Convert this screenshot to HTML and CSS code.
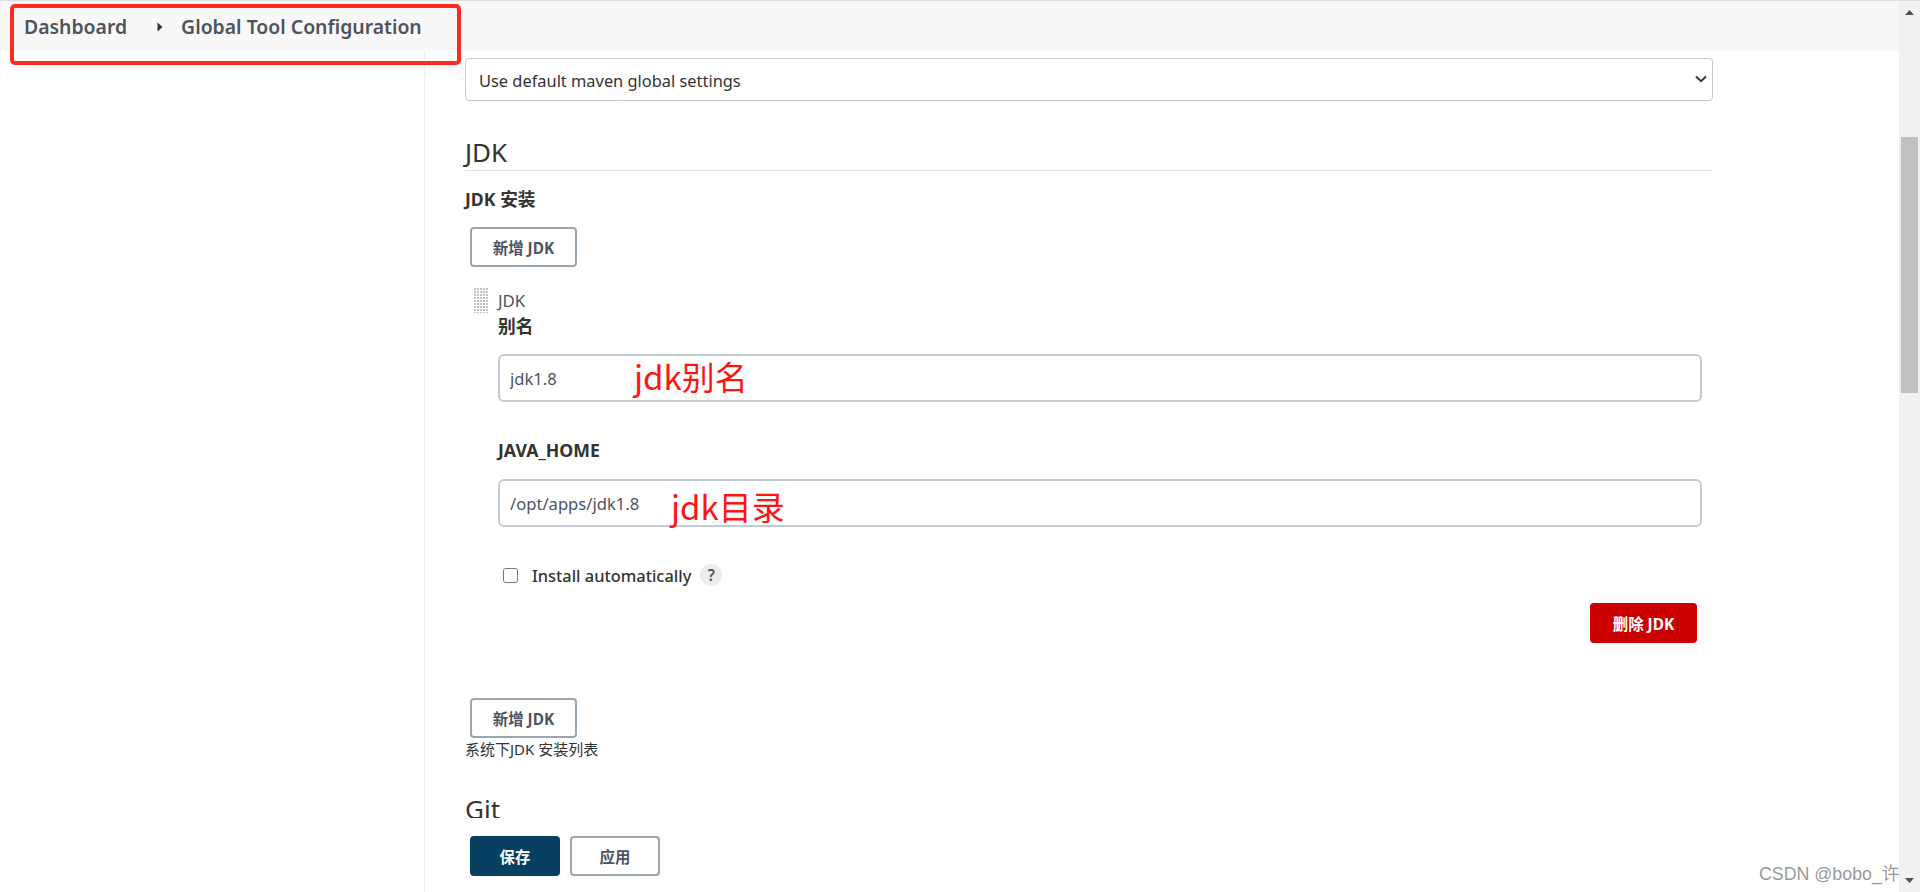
FILE: index.html
```html
<!DOCTYPE html>
<html lang="zh">
<head>
<meta charset="utf-8">
<title>Global Tool Configuration</title>
<link rel="stylesheet" href="styles.css">
</head>
<body>
<div class="page">
  <div class="viewport">
    <header class="breadcrumbs">
      <a class="crumb">Dashboard</a>
      <svg class="crumb-arrow" width="6" height="10" viewBox="0 0 6 10"><path d="M0.5 0.5L5.5 5L0.5 9.5Z" fill="#333"/></svg>
      <a class="crumb">Global Tool Configuration</a>
    </header>
    <div class="main">
      <aside class="side"></aside>
      <section class="content">
        <div class="select-wrap">
          <select class="select"><option>Use default maven global settings</option></select>
          <svg class="chevron" width="12" height="8" viewBox="0 0 12 8"><path d="M1 1.5L6 6.2L11 1.5" fill="none" stroke="#333" stroke-width="2"/></svg>
        </div>
        <h2 class="section-title">JDK</h2>
        <div class="field-label install-label">JDK 安装</div>
        <button class="btn btn-add first-add">新增 JDK</button>
        <div class="repeat-item">
          <div class="handle"></div>
          <div class="item-body">
            <div class="item-title">JDK</div>
            <div class="field-label">别名</div>
            <div class="input-wrap alias-wrap">
              <input class="input" value="jdk1.8">
              <span class="note note-alias">jdk别名</span>
            </div>
            <div class="field-label home-label">JAVA_HOME</div>
            <div class="input-wrap home-wrap">
              <input class="input" value="/opt/apps/jdk1.8">
              <span class="note note-home">jdk目录</span>
            </div>
            <div class="check-row">
              <input type="checkbox" class="check" id="auto">
              <label class="check-label" for="auto">Install automatically</label>
              <span class="help">?</span>
            </div>
            <div class="delete-row"><button class="btn btn-delete">删除 JDK</button></div>
          </div>
        </div>
        <button class="btn btn-add second-add">新增 JDK</button>
        <div class="desc">系统下JDK 安装列表</div>
        <div class="git-clip"><h2 class="git-title">Git</h2></div>
        <div class="bottom-bar">
          <button class="btn btn-save">保存</button>
          <button class="btn btn-apply">应用</button>
        </div>
      </section>
    </div>
    <div class="red-frame"></div>
  </div>
  <div class="scrollbar">
    <svg class="arrow-up" width="9" height="5" viewBox="0 0 9 5"><path d="M4.5 0L9 5H0Z" fill="#505050"/></svg>
    <div class="thumb"></div>
    <svg class="arrow-down" width="9" height="5" viewBox="0 0 9 5"><path d="M0 0H9L4.5 5Z" fill="#505050"/></svg>
  </div>
  <div class="watermark">CSDN @bobo_许</div>
</div>
</body>
</html>
```

FILE: styles.css
```css
* { box-sizing: border-box; }
html, body { margin: 0; height: 100%; overflow: hidden; background: #fff; }
body { font-family: "Noto Sans", "Noto Sans CJK SC", sans-serif; color: #333; font-size: 16px; }

.page { display: flex; height: 892px; border-top: 1px solid #ddd; position: relative; }
.viewport { flex: 1; min-width: 0; position: relative; }

.breadcrumbs { height: 50px; background: #f8f8f8; display: flex; align-items: center; padding-left: 24px; padding-top: 1px; }
.crumb { font-size: 19.4px; font-weight: 600; color: #4d545d; }
.crumb-arrow { margin: 0 18px 0 30px; }

.main { display: flex; height: 841px; }
.side { width: 425px; flex: none; border-right: 1px solid #f0f0f0; }
.content { width: 1288px; padding: 0 0 0 40px; }

.select-wrap { position: relative; margin-top: 7px; width: 1248px; }
.select { display: block; width: 100%; height: 43px; padding: 1px 13px 0; appearance: none; background: #fff; border: 1.5px solid #c3ccd1; border-radius: 4px; font: 400 16.4px "Noto Sans", sans-serif; color: #333; }
.chevron { position: absolute; right: 6px; top: 17px; }

.section-title { margin: 36px 0 0; width: 1248px; height: 34px; line-height: 30px; font-size: 26px; font-weight: 400; color: #333; border-bottom: 1px solid #e0e0e0; }

.field-label { font-size: 17.7px; font-weight: 700; line-height: 22px; height: 24px; color: #333; }
.install-label { margin-top: 17px; }

.btn { display: block; height: 40px; width: 107px; border-radius: 4px; font-family: "Noto Sans", "Noto Sans CJK SC", sans-serif; font-size: 15.4px; font-weight: 700; padding: 0; cursor: pointer; }
.btn-add, .btn-apply { background: #fff; border: 2px solid #9aa6b0; color: #4d545d; }
.first-add { margin: 15px 0 0 5px; }
.second-add { margin: 55px 0 0 5px; }

.repeat-item { display: flex; margin: 21px 0 0 9px; width: 1228px; gap: 10px; }
.handle { width: 14px; height: 25px; flex: none; background: linear-gradient(90deg, transparent 2px, #fff 2px), linear-gradient(transparent 2px, #fff 2px), #c4c4c4; background-size: 3px 3px; }
.item-body { flex: 1; min-width: 0; }
.item-title { line-height: 24px; height: 24px; margin-top: 1px; font-size: 16.8px; color: #4d545d; }
.item-title + .field-label { margin-top: 2px; }

.input-wrap { position: relative; }
.alias-wrap { margin-top: 15px; }
.home-wrap { margin-top: 16px; }
.home-label { margin-top: 37px; }
.input { display: block; width: 1204px; height: 48px; padding: 1px 10px 0; border: 2px solid #c3ccd1; border-radius: 6px; font: 400 16.6px "Noto Sans", sans-serif; color: #4d545d; background: #fff; }

.note { position: absolute; font-family: "Noto Sans CJK SC", sans-serif; font-size: 33px; line-height: 44px; color: #ff1414; white-space: nowrap; }
.note-alias { left: 136px; top: 0; }
.note-home { left: 173px; top: 5px; }

.check-row { display: flex; align-items: center; height: 22px; margin-top: 37px; padding-left: 5px; }
.check { width: 15px; height: 15px; margin: 0 14px 0 0; }
.check-label { font-size: 16.4px; font-weight: 500; color: #333; }
.help { width: 22px; height: 22px; margin-left: 9px; border-radius: 50%; background: #ebedef; text-align: center; font-size: 15.5px; font-weight: 600; line-height: 22px; color: #4d545d; }

.delete-row { display: flex; justify-content: flex-end; margin-top: 17px; padding-right: 5px; }
.btn-delete { background: #c00; border: 0; color: #fff; }

.desc { margin-top: 2px; font-size: 15px; line-height: 18px; height: 19px; color: #333; white-space: nowrap; }
.git-clip { margin-top: 34px; height: 25px; overflow: hidden; }
.git-title { margin: 0; font-size: 26px; font-weight: 400; line-height: 32px; color: #333; }

.bottom-bar { display: flex; gap: 10px; padding: 18px 0 0 5px; }
.btn-save, .btn-apply { width: 90px; }
.btn-save { background: #063f5f; border: 0; color: #fff; }

.red-frame { position: absolute; left: 10px; top: 3px; width: 451px; height: 61px; border: 4px solid #ff2a1f; border-radius: 5px; pointer-events: none; }

.scrollbar { width: 21px; flex: none; background: #f1f1f1; display: flex; flex-direction: column; align-items: center; }
.arrow-up { margin-top: 9px; flex: none; }
.thumb { width: 17px; height: 256px; margin-top: 122px; background: #c1c1c1; }
.arrow-down { margin-top: auto; margin-bottom: 9px; flex: none; }

.watermark { position: absolute; left: 1759px; top: 861px; font-family: "Liberation Sans", "Noto Sans CJK SC", sans-serif; font-size: 17.8px; line-height: 24px; color: rgba(110,110,110,.72); white-space: nowrap; }
```
